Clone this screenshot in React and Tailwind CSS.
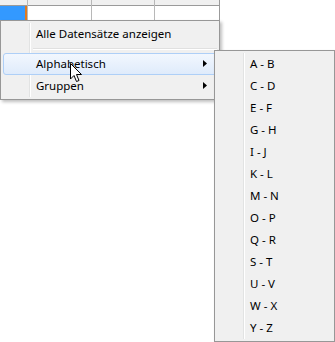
import React from 'react';

const font = { fontFamily: '"Noto Sans", "Open Sans", sans-serif' };

const ranges = ['A - B', 'C - D', 'E - F', 'G - H', 'I - J', 'K - L', 'M - N', 'O - P', 'Q - R', 'S - T', 'U - V', 'W - X', 'Y - Z'];

function Arrow() {
  return (
    <svg width="4" height="7" viewBox="0 0 4 7" className="absolute right-[10px] top-[7px]">
      <path d="M0 0 L4 3.5 L0 7 Z" fill="#000" />
    </svg>
  );
}

function Cursor() {
  return (
    <svg width="13" height="20" viewBox="0 0 13 20" className="absolute left-[70px] top-[63px]">
      <path d="M0.5 0.5 L0.5 16 L4 12.5 L6.5 18.5 L9 17.5 L6.5 11.5 L11.5 11.5 Z" fill="#fff" stroke="#000" strokeWidth="1" />
    </svg>
  );
}

function MenuItem({ children, highlighted, sub }) {
  return (
    <div className="relative h-[22px] flex items-center">
      {highlighted && (
        <div className="absolute inset-0 rounded-[3px] border border-[#aecff7] bg-gradient-to-b from-[#f2f7fe] to-[#dfebfb]" />
      )}
      <span className="relative pl-[33px] text-[11.5px] leading-none text-black">{children}</span>
      {sub && <Arrow />}
    </div>
  );
}

function Gutter() {
  return <div className="absolute left-[28px] top-[2px] bottom-[2px] w-[2px] border-l border-[#e2e3e3] border-r border-r-white" />;
}

export default function App() {
  return (
    <div className="relative w-[335px] h-[342px] bg-white overflow-hidden" style={font}>
      {/* grid behind */}
      <div className="flex w-[220px] border-r border-[#9a9a9a]">
        <div className="w-[28px] border-r border-[#b8b8b8]">
          <div className="h-[6px] bg-[#f0f0f0] border-b border-[#9a9a9a]" />
          <div className="h-[14px] bg-[#3399ff] border-r-2 border-[#e07a1f]" />
        </div>
        {[0, 1, 2].map((i) => (
          <div key={i} className={`w-[64px] ${i < 2 ? 'border-r border-[#b8b8b8]' : ''}`}>
            <div className="h-[6px] bg-[#f0f0f0] border-b border-[#9a9a9a]" />
            <div className="h-[14px] bg-white" />
          </div>
        ))}
      </div>

      {/* context menu */}
      <div className="absolute left-0 top-[20px] w-[220px] h-[80px] bg-[#f0f0f0] border border-[#979797] shadow-[2px_2px_3px_rgba(0,0,0,0.25)] p-[2px]">
        <Gutter />
        <MenuItem>Alle Datensätze anzeigen</MenuItem>
        <div className="h-[8px] flex items-center pl-[30px]">
          <div className="w-full h-[2px] border-t border-[#e0e0e0] border-b border-b-white" />
        </div>
        <MenuItem highlighted sub>Alphabetisch</MenuItem>
        <MenuItem sub>Gruppen</MenuItem>
      </div>

      {/* submenu */}
      <div className="absolute left-[214px] top-[50px] w-[121px] h-[292px] bg-[#f0f0f0] border border-[#979797] shadow-[2px_2px_3px_rgba(0,0,0,0.25)] p-[2px]">
        <Gutter />
        {ranges.map((r) => (
          <MenuItem key={r}>{r}</MenuItem>
        ))}
      </div>

      <Cursor />
    </div>
  );
}
